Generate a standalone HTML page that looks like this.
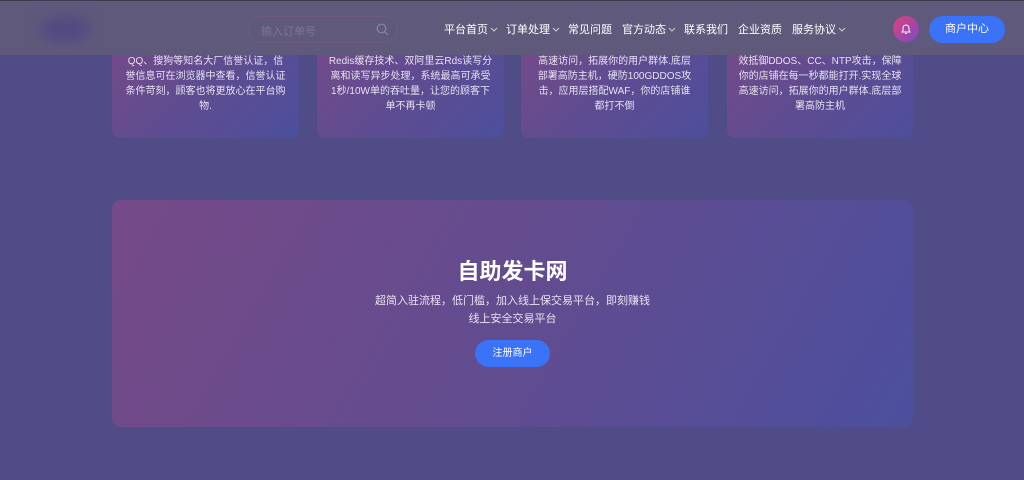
<!DOCTYPE html>
<html><head><meta charset="utf-8">
<style>
*{margin:0;padding:0;box-sizing:border-box}
body{width:1024px;height:480px;overflow:hidden;background:#504c88;font-family:"Liberation Sans","Noto Sans CJK SC",sans-serif;position:relative;color:#fff}
.card{position:absolute;top:20px;height:118px;border-radius:8px;background:linear-gradient(135deg,#784a88 0%,#5f4c90 50%,#4d4f9d 100%);font-size:10px;line-height:15px;color:#e6e2f0;text-align:center;padding:0 13px;padding-top:34px}
.hdr{position:absolute;left:0;top:0;width:1024px;height:55px;background:#5f5a7c;border-top:1px solid #3e3b50}
.logo{position:absolute;left:40px;top:14px;width:50px;height:28px;border-radius:50%;background:#544a82;filter:blur(6px)}
.search{position:absolute;left:248px;top:15px;width:150px;height:27px;border-radius:14px;border:1px solid #6e5a82;font-size:11px;color:#7c7694;padding:6px 12px}
.nav{position:absolute;top:20px;font-size:11px;color:#fff;white-space:nowrap}
.nav svg{margin-left:2px;vertical-align:1px}
.banner{position:absolute;left:112px;top:200px;width:801px;height:227px;border-radius:9px;background:linear-gradient(120deg,#764a88 0%,#624c8f 50%,#4c4f9e 100%);text-align:center}
.btn{background:#3a72f8;border-radius:14px;color:#fff}
</style></head><body>
<div class="card" style="left:112px;width:187px">QQ、搜狗等知名大厂信誉认证，信誉信息可在浏览器中查看，信誉认证条件苛刻，顾客也将更放心在平台购物.</div>
<div class="card" style="left:317px;width:187px;padding-left:4px;padding-right:4px;white-space:nowrap">Redis缓存技术、双阿里云Rds读写分<br>离和读写异步处理，系统最高可承受<br>1秒/10W单的吞吐量，让您的顾客下<br>单不再卡顿</div>
<div class="card" style="left:521px;width:187px">高速访问，拓展你的用户群体.底层部署高防主机，硬防100GDDOS攻击，应用层搭配WAF，你的店铺谁都打不倒</div>
<div class="card" style="left:727px;width:186px;padding-left:10px;padding-right:10px">效抵御DDOS、CC、NTP攻击，保障你的店铺在每一秒都能打开.实现全球高速访问，拓展你的用户群体.底层部署高防主机</div>
<div class="hdr">
<div class="logo"></div>
<div class="search">输入订单号
<svg style="position:absolute;right:8px;top:6px" width="13" height="13" viewBox="0 0 13 13"><circle cx="5.5" cy="5.5" r="4.3" fill="none" stroke="#8a85a0" stroke-width="1.2"/><path d="M8.6 8.6L12 12" stroke="#8a85a0" stroke-width="1.2"/></svg></div>
<div class="nav" style="left:444px">平台首页<svg width="8" height="5" viewBox="0 0 8 5"><path d="M1 1l3 3 3-3" fill="none" stroke="#ccc" stroke-width="1"/></svg></div>
<div class="nav" style="left:506px">订单处理<svg width="8" height="5" viewBox="0 0 8 5"><path d="M1 1l3 3 3-3" fill="none" stroke="#ccc" stroke-width="1"/></svg></div>
<div class="nav" style="left:568px">常见问题</div>
<div class="nav" style="left:622px">官方动态<svg width="8" height="5" viewBox="0 0 8 5"><path d="M1 1l3 3 3-3" fill="none" stroke="#ccc" stroke-width="1"/></svg></div>
<div class="nav" style="left:684px">联系我们</div>
<div class="nav" style="left:738px">企业资质</div>
<div class="nav" style="left:792px">服务协议<svg width="8" height="5" viewBox="0 0 8 5"><path d="M1 1l3 3 3-3" fill="none" stroke="#ccc" stroke-width="1"/></svg></div>
<div style="position:absolute;left:893px;top:15px;width:26px;height:26px;border-radius:50%;background:linear-gradient(135deg,#e0407a,#7a4ac8)">
<svg style="position:absolute;left:8px;top:7px" width="10" height="12" viewBox="0 0 10 12"><path d="M1 9h8L8 7.5V5a3 3 0 0 0-6 0v2.5Z" fill="none" stroke="#fff" stroke-width="1"/><path d="M4 10.5h2" stroke="#fff"/></svg></div>
<div class="btn" style="position:absolute;left:929px;top:15px;width:76px;height:27px;font-size:11px;line-height:27px;text-align:center;border-radius:14px">商户中心</div>
</div>
<div class="banner">
<div style="position:absolute;top:57px;width:100%;font-size:22px;font-weight:bold;line-height:30px">自助发卡网</div>
<div style="position:absolute;top:92px;width:100%;font-size:11px;line-height:18px;color:#e8e2f2">超简入驻流程，低门槛，加入线上保交易平台，即刻赚钱<br>线上安全交易平台</div>
<div class="btn" style="position:absolute;left:363px;top:140px;width:75px;height:27px;font-size:10px;line-height:27px">注册商户</div>
</div>
</body></html>
